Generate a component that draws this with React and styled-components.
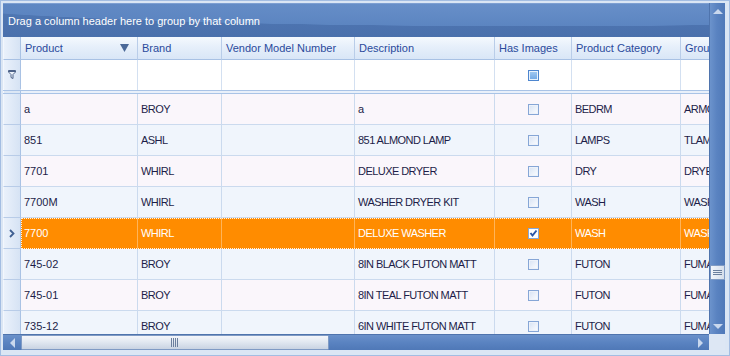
import React from 'react';
import styled, { createGlobalStyle, css } from 'styled-components';

const GlobalStyle = createGlobalStyle`
  html, body { margin: 0; padding: 0; background: #ffffff; }
  body { font-family: "Liberation Sans", Arial, sans-serif; }
  #root { width: 730px; height: 356px; }
`;

const columns = [
  { key: 'product', title: 'Product', width: 117, sort: true },
  { key: 'brand', title: 'Brand', width: 84, caps: true },
  { key: 'vendor', title: 'Vendor Model Number', width: 133 },
  { key: 'desc', title: 'Description', width: 140, caps: true },
  { key: 'img', title: 'Has Images', width: 77, check: true },
  { key: 'cat', title: 'Product Category', width: 109, caps: true },
  { key: 'group', title: 'Group', width: 120, caps: true },
];

const rows = [
  { product: 'a', brand: 'BROY', vendor: '', desc: 'a', img: false, cat: 'BEDRM', group: 'ARMOIRE' },
  { product: '851', brand: 'ASHL', vendor: '', desc: '851 ALMOND LAMP', img: false, cat: 'LAMPS', group: 'TLAMPS' },
  { product: '7701', brand: 'WHIRL', vendor: '', desc: 'DELUXE DRYER', img: false, cat: 'DRY', group: 'DRYERS' },
  { product: '7700M', brand: 'WHIRL', vendor: '', desc: 'WASHER DRYER KIT', img: false, cat: 'WASH', group: 'WASHERS' },
  { product: '7700', brand: 'WHIRL', vendor: '', desc: 'DELUXE WASHER', img: true, cat: 'WASH', group: 'WASHERS', selected: true },
  { product: '745-02', brand: 'BROY', vendor: '', desc: '8IN BLACK FUTON MATT', img: false, cat: 'FUTON', group: 'FUMATT' },
  { product: '745-01', brand: 'BROY', vendor: '', desc: '8IN TEAL FUTON MATT', img: false, cat: 'FUTON', group: 'FUMATT' },
  { product: '735-12', brand: 'BROY', vendor: '', desc: '6IN WHITE FUTON MATT', img: false, cat: 'FUTON', group: 'FUMATT' },
];

const Frame = styled.div`
  box-sizing: border-box;
  width: 730px;
  height: 356px;
  background: #dbe6f4;
  border: 1px solid #a3bde2;
  padding: 2px 4px 5px 2px;
`;

const GridControl = styled.div`
  display: grid;
  grid-template-columns: 706px 16px;
  grid-template-rows: 331px 16px;
  width: 722px;
  height: 347px;
`;

const Main = styled.div`
  display: flex;
  flex-direction: column;
  overflow: hidden;
  background: #ffffff;
`;

const GroupPanel = styled.div`
  flex: none;
  height: 34px;
  display: flex;
  align-items: center;
  padding-left: 5px;
  color: #ffffff;
  font-size: 11px;
  background:
    radial-gradient(ellipse 900px 40px at 75% -6px, #6b92cb 0%, #5c85c1 70%, rgba(92,133,193,0) 71%),
    linear-gradient(180deg, #5179b5 0%, #4a70ac 100%);
  border-top: 1px solid #7d9fd2;
  box-sizing: border-box;
`;

const Line = styled.div`
  flex: none;
  display: flex;
  height: ${p => p.$h}px;
  box-sizing: border-box;
`;

const Indicator = styled.div`
  flex: none;
  width: 18px;
  box-sizing: border-box;
  display: flex;
  align-items: center;
  justify-content: center;
  border-left: 1px solid #f3f7fd;
  border-right: 1px solid #a9c2e4;
  border-bottom: 1px solid ${p => (p.$noBottom ? 'transparent' : '#b8cce8')};
  background: linear-gradient(90deg, #eaf1fb 0%, #d6e3f4 100%);
`;

const Cells = styled.div`
  display: flex;
  flex: none;
  position: relative;
  ${p => p.$focus && css`
    &::after {
      content: '';
      position: absolute;
      inset: 0 -300px 0 0;
      border: 1px dotted rgba(255, 255, 255, 0.9);
      pointer-events: none;
    }
  `}
`;

const HeaderCell = styled.div`
  flex: none;
  width: ${p => p.$w}px;
  box-sizing: border-box;
  display: flex;
  align-items: center;
  justify-content: space-between;
  padding: 0 8px 0 4px;
  font-size: 11px;
  color: #2a4a9c;
  white-space: nowrap;
  overflow: hidden;
  background: linear-gradient(180deg, #f5f9fe 0%, #e6effa 45%, #d9e6f7 100%);
  border-right: 1px solid #b9cde9;
  border-bottom: 1px solid #a8c1e4;
`;

const FilterCell = styled.div`
  flex: none;
  width: ${p => p.$w}px;
  box-sizing: border-box;
  display: flex;
  align-items: center;
  justify-content: center;
  background: #ffffff;
  border-right: 1px solid #d3e0f1;
`;

const Separator = styled.div`
  flex: none;
  height: 4px;
  box-sizing: border-box;
  border-top: 1px solid #a9c3e6;
  border-bottom: 1px solid #a9c3e6;
  background: #e9f0fa;
  display: flex;
`;

const SepIndicator = styled.div`
  width: 18px;
  box-sizing: border-box;
  border-left: 1px solid #f3f7fd;
  border-right: 1px solid #a9c2e4;
  background: #dce7f5;
`;

const Cell = styled.div`
  flex: none;
  width: ${p => p.$w}px;
  height: 31px;
  box-sizing: border-box;
  display: flex;
  align-items: center;
  justify-content: ${p => (p.$center ? 'center' : 'flex-start')};
  padding: 0 3px;
  font-size: 11px;
  letter-spacing: ${p => (p.$caps ? '-0.55px' : '0')};
  white-space: nowrap;
  overflow: hidden;
  color: ${p => (p.$sel ? '#ffffff' : '#1d1d48')};
  background: ${p => (p.$sel ? '#ff8c00' : p.$odd ? '#f0f5fc' : '#faf6fb')};
  border-right: 1px solid ${p => (p.$sel ? 'rgba(255,255,255,0.35)' : '#cbdaee')};
  border-bottom: 1px solid ${p => (p.$sel ? '#ff8c00' : '#cbdaee')};
`;

const Check = styled.span`
  display: inline-flex;
  align-items: center;
  justify-content: center;
  width: 11px;
  height: 11px;
  box-sizing: border-box;
  border: 1px solid #86a6d6;
  background: ${p => (p.$checked ? '#ffffff' : 'linear-gradient(135deg, #d6e2f3 0%, #eef3fb 60%, #fbfdff 100%)')};
  box-shadow: inset 0 0 0 1px ${p => (p.$checked ? '#ffffff' : '#edf2fa')};
`;

const FilterCheck = styled.span`
  display: inline-block;
  width: 11px;
  height: 11px;
  box-sizing: border-box;
  border: 1px solid #4e86cf;
  background: linear-gradient(180deg, #a4cbf2 0%, #6ea6e4 100%);
  box-shadow: inset 0 0 0 1px #e8f2fc;
`;

const VScroll = styled.div`
  display: flex;
  flex-direction: column;
  align-items: center;
  background: linear-gradient(90deg, #6c93cc 0%, #5a83c1 45%, #5079b8 100%);
  border-left: 1px solid #4f74ad;
  box-sizing: border-box;
`;

const HScroll = styled.div`
  display: flex;
  align-items: center;
  background: linear-gradient(180deg, #6a91ca 0%, #5a83c1 50%, #4f78b7 100%);
  border-top: 1px solid #4f74ad;
  box-sizing: border-box;
`;

const ArrowBtn = styled.div`
  flex: none;
  display: flex;
  align-items: center;
  justify-content: center;
  width: ${p => p.$w}px;
  height: ${p => p.$h}px;
`;

const Track = styled.div`
  flex: ${p => (p.$fixed ? 'none' : '1')};
  ${p => p.$fixed && css`
    width: ${p.$w || 'auto'};
    height: ${p.$h || 'auto'};
  `}
`;

const VThumb = styled.div`
  flex: none;
  width: 15px;
  height: 15px;
  box-sizing: border-box;
  border: 1px solid #7f9ac4;
  background: linear-gradient(90deg, #f2f5fa 0%, #d5deeb 100%);
  display: flex;
  align-items: center;
  justify-content: center;
`;

const HThumb = styled.div`
  flex: none;
  width: 308px;
  height: 15px;
  box-sizing: border-box;
  border: 1px solid #7f9ac4;
  border-radius: 1px;
  background: linear-gradient(180deg, #f4f6fa 0%, #e2e8f1 45%, #c9d3e2 100%);
  display: flex;
  align-items: center;
  justify-content: center;
`;

const Corner = styled.div`
  background: #dde7f4;
`;

const Funnel = () => (
  <svg width="8" height="9" viewBox="0 0 8 9">
    <path d="M0.5 0.5 H7.5 V2 L5 4.5 V8.5 L3 7.5 V4.5 L0.5 2 Z" fill="#eef3fa" stroke="#4d6288" strokeWidth="1" />
    <path d="M1 1.5 H7" stroke="#4d6288" strokeWidth="1" />
  </svg>
);

const SortArrow = () => (
  <svg width="9" height="8" viewBox="0 0 9 8">
    <path d="M0 0 H9 L4.5 8 Z" fill="#4a6898" />
  </svg>
);

const Chevron = () => (
  <svg width="6" height="9" viewBox="0 0 6 9">
    <path d="M1 1 L4.5 4.5 L1 8" fill="none" stroke="#3f5f92" strokeWidth="1.8" />
  </svg>
);

const CheckMark = () => (
  <svg width="9" height="9" viewBox="0 0 9 9">
    <path d="M1.5 4 L3.5 6.5 L7.5 1.5" fill="none" stroke="#2a56a8" strokeWidth="2" />
  </svg>
);

const Tri = ({ dir }) => {
  const d = {
    up: 'M0 5 L5 0 L10 5 Z',
    down: 'M0 0 L10 0 L5 5 Z',
    left: 'M5 0 L5 10 L0 5 Z',
    right: 'M0 0 L5 5 L0 10 Z',
  }[dir];
  const vert = dir === 'up' || dir === 'down';
  return (
    <svg width={vert ? 10 : 5} height={vert ? 5 : 10} viewBox={vert ? '0 0 10 5' : '0 0 5 10'}>
      <path d={d} fill="#c9d8ee" />
    </svg>
  );
};

const VGrip = () => (
  <svg width="9" height="7" viewBox="0 0 9 7">
    <path d="M0 1.5 H9 M0 3.5 H9 M0 5.5 H9" stroke="#6b7f9e" strokeWidth="1" />
  </svg>
);

const HGrip = () => (
  <svg width="8" height="9" viewBox="0 0 8 9">
    <path d="M0.5 0 V9 M2.5 0 V9 M4.5 0 V9 M6.5 0 V9" stroke="#6b7f9e" strokeWidth="1" />
  </svg>
);

export default function App() {
  return (
    <>
      <GlobalStyle />
      <Frame>
        <GridControl>
          <Main>
            <GroupPanel>Drag a column header here to group by that column</GroupPanel>

            <Line $h={23}>
              <Indicator style={{ borderBottom: '1px solid #a8c1e4' }} />
              <Cells>
                {columns.map(c => (
                  <HeaderCell key={c.key} $w={c.width}>
                    <span>{c.title}</span>
                    {c.sort && <SortArrow />}
                  </HeaderCell>
                ))}
              </Cells>
            </Line>

            <Line $h={30}>
              <Indicator $noBottom>
                <Funnel />
              </Indicator>
              <Cells>
                {columns.map(c => (
                  <FilterCell key={c.key} $w={c.width}>
                    {c.check && <FilterCheck />}
                  </FilterCell>
                ))}
              </Cells>
            </Line>

            <Separator>
              <SepIndicator />
            </Separator>

            {rows.map((r, i) => (
              <Line $h={31} key={i}>
                <Indicator>{r.selected && <Chevron />}</Indicator>
                <Cells $focus={r.selected}>
                  {columns.map(c => (
                    <Cell
                      key={c.key}
                      $w={c.width}
                      $caps={c.caps}
                      $center={c.check}
                      $odd={i % 2 === 1}
                      $sel={r.selected}
                    >
                      {c.check ? (
                        <Check $checked={r[c.key]}>{r[c.key] && <CheckMark />}</Check>
                      ) : (
                        r[c.key]
                      )}
                    </Cell>
                  ))}
                </Cells>
              </Line>
            ))}
          </Main>

          <VScroll>
            <ArrowBtn $w={15} $h={17}>
              <Tri dir="up" />
            </ArrowBtn>
            <Track />
            <VThumb>
              <VGrip />
            </VThumb>
            <Track $fixed $h="38px" />
            <ArrowBtn $w={15} $h={16}>
              <Tri dir="down" />
            </ArrowBtn>
          </VScroll>

          <HScroll>
            <ArrowBtn $w={18} $h={15}>
              <Tri dir="left" />
            </ArrowBtn>
            <HThumb>
              <HGrip />
            </HThumb>
            <Track />
            <ArrowBtn $w={17} $h={15}>
              <Tri dir="right" />
            </ArrowBtn>
          </HScroll>

          <Corner />
        </GridControl>
      </Frame>
    </>
  );
}
